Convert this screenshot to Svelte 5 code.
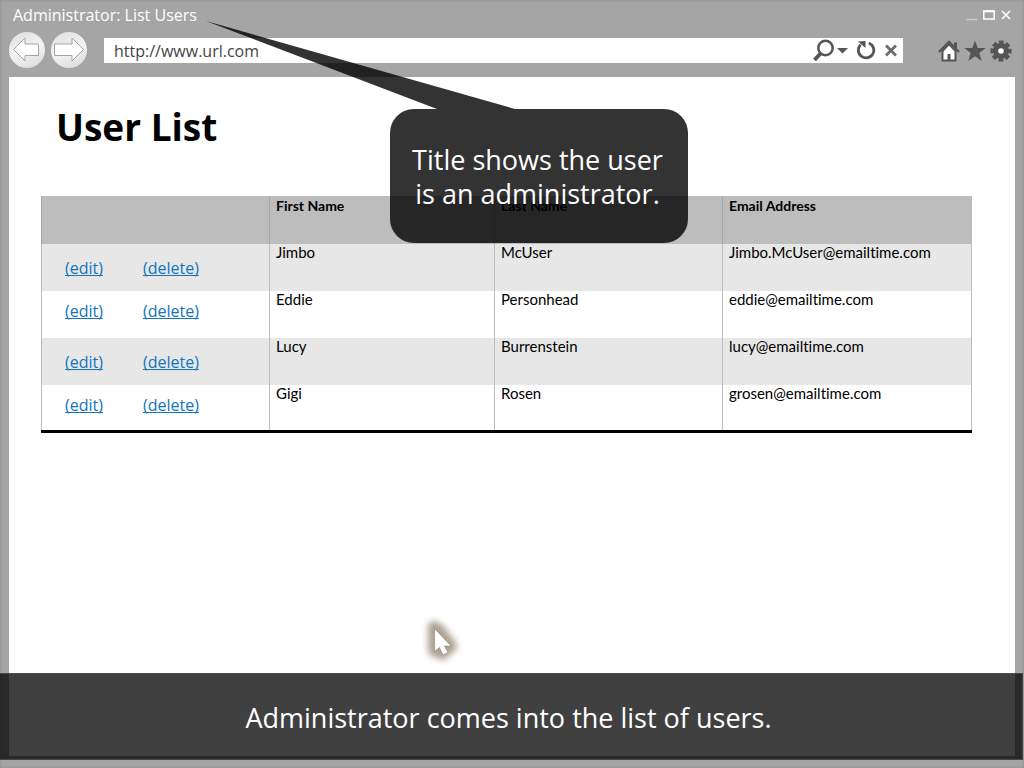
<script>
	let url = 'http://www.url.com';

	const users = [
		{ first: 'Jimbo', last: 'McUser', email: 'Jimbo.McUser@emailtime.com' },
		{ first: 'Eddie', last: 'Personhead', email: 'eddie@emailtime.com' },
		{ first: 'Lucy', last: 'Burrenstein', email: 'lucy@emailtime.com' },
		{ first: 'Gigi', last: 'Rosen', email: 'grosen@emailtime.com' }
	];
</script>

<div class="window">
	<!-- title bar -->
	<header class="title-bar">
		<span class="title">Administrator: List Users</span>
		<div class="window-buttons">
			<button aria-label="Minimize">
				<svg width="12" height="12" viewBox="0 0 12 12">
					<path d="M0.5 10.500h11" stroke="#c8c8c8" stroke-width="1.5" />
				</svg>
			</button>
			<button aria-label="Maximize">
				<svg width="12" height="12" viewBox="0 0 12 12">
					<path d="M0.800 2h10.400v8H0.800z" fill="none" stroke="#fff" stroke-width="1.5" />
					<path d="M0.800 2.300h10.400" stroke="#fff" stroke-width="2" />
				</svg>
			</button>
			<button aria-label="Close">
				<svg width="12" height="12" viewBox="0 0 12 12">
					<path d="M2 2l8 8M10 2l-8 8" stroke="#fff" stroke-width="1.6" />
				</svg>
			</button>
		</div>
	</header>

	<!-- toolbar -->
	<div class="toolbar">
		<div class="nav">
			<button aria-label="Back">
				<svg width="36" height="36" viewBox="0 0 36 36">
					<path d="M4.500 17.500L16 6v6h13.500v11.500H16v5.500z" fill="#fff" stroke="#a3a3a3" />
				</svg>
			</button>
			<button aria-label="Forward">
				<svg width="36" height="36" viewBox="0 0 36 36">
					<path d="M32.500 17.500L21 6v6H3.500v11.500H21v5.500z" fill="#fff" stroke="#a3a3a3" />
				</svg>
			</button>
		</div>

		<div class="address">
			<input type="text" aria-label="Address" bind:value={url} />
			<button aria-label="Search">
				<svg width="36" height="24" viewBox="0 0 36 24">
					<circle cx="13.500" cy="10" r="7.200" fill="none" stroke="#555" stroke-width="2.500" />
					<path d="M8.500 15.500L2.500 22" stroke="#555" stroke-width="4" />
					<path d="M25 10h11l-5.500 5.500z" fill="#555" />
				</svg>
			</button>
			<button aria-label="Refresh">
				<svg width="20" height="24" viewBox="0 0 20 24">
					<path d="M12.800 5A7.700 7.700 0 1 1 4.600 6.800" fill="none" stroke="#555" stroke-width="2.800" />
					<path d="M2 3.500L9.500 3v7z" fill="#555" />
				</svg>
			</button>
			<button aria-label="Stop">
				<svg width="14" height="24" viewBox="0 0 14 24">
					<path d="M2 7.500l10 10M12 7.500L2 17.500" stroke="#6c6c6c" stroke-width="2.800" />
				</svg>
			</button>
		</div>

		<div class="tools">
			<button aria-label="Home">
				<svg width="22" height="22" viewBox="0 0 22 22">
					<path d="M16 2.500h3V9l-3-3z" fill="#555" />
					<path d="M4.500 11L11 4l6.500 7v9.500h-13z" fill="#fff" stroke="#555" stroke-width="2" />
					<path d="M1 12L11 1.800l10 10.200" fill="none" stroke="#555" stroke-width="2.200" />
					<path d="M9.500 14h3v6.500h-3z" fill="#555" />
				</svg>
			</button>
			<button aria-label="Favorites">
				<svg width="22" height="22" viewBox="0 0 22 22">
					<path d="M11 0.500l2.700 7.600h8.100l-6.500 4.800 2.400 8L11 16.200l-6.700 4.700 2.400-8L0.200 8.100h8.100z" fill="#555" />
				</svg>
			</button>
			<button aria-label="Settings">
				<svg width="22" height="22" viewBox="0 0 22 22">
					<circle cx="11" cy="11" r="8" fill="#555" />
					<circle cx="11" cy="11" r="8.800" fill="none" stroke="#555" stroke-width="3.600" stroke-dasharray="4.600 2.310" stroke-dashoffset="2.300" />
					<circle cx="11" cy="11" r="2.800" fill="#fff" />
				</svg>
			</button>
		</div>
	</div>

	<!-- page -->
	<main class="page">
		<h1>User List</h1>
		<table>
			<thead>
				<tr>
					<th class="actions"></th>
					<th class="first">First Name</th>
					<th class="last">Last Name</th>
					<th>Email Address</th>
				</tr>
			</thead>
			<tbody>
				{#each users as user}
					<tr>
						<td class="actions">
							<div class="links">
								<a href="#edit">(edit)</a>
								<a href="#delete">(delete)</a>
							</div>
						</td>
						<td>{user.first}</td>
						<td>{user.last}</td>
						<td>{user.email}</td>
					</tr>
				{/each}
			</tbody>
		</table>
	</main>

	<!-- annotations over the page -->
	<div class="callout">
		<svg class="tail" width="310" height="88" viewBox="0 0 310 88">
			<path d="M0 0L309 88H231z" />
		</svg>
		Title shows the user<br />is an administrator.
	</div>

	<svg class="cursor" width="60" height="64" viewBox="0 0 60 64">
		<defs>
			<filter id="glow" x="-100%" y="-100%" width="300%" height="300%">
				<feGaussianBlur stdDeviation="3" />
			</filter>
		</defs>
		<path d="M24 17L24 40L32 44L41 36L29 20z" fill="#8a7a64" stroke="#8a7a64" stroke-width="12" stroke-linejoin="round" opacity="0.7" filter="url(#glow)" />
		<path d="M24.500 18.500v23l5-4 3.500 7.500 5-2.500-3.500-6.500h6.500z" fill="#fff" stroke="#8c8373" stroke-width="0.600" />
	</svg>

	<div class="caption">Administrator comes into the list of users.</div>
</div>

<style>
	:global(body) {
		margin: 0;
	}
	.window {
		position: relative;
		display: flex;
		flex-direction: column;
		box-sizing: border-box;
		min-height: 100vh;
		padding: 0 9px 12px;
		background: #a5a5a5;
		box-shadow: inset 0 0 3px #888;
		font-family: 'Open Sans', 'Noto Sans', sans-serif;
	}
	button {
		display: flex;
		padding: 0;
		border: none;
		background: none;
		cursor: pointer;
	}
	.title-bar {
		display: flex;
		align-items: center;
		justify-content: space-between;
		height: 30px;
		padding: 0 3px 2px 4px;
	}
	.title {
		color: #fff;
		font-size: 16px;
	}
	.window-buttons {
		display: flex;
		gap: 5px;
	}
	.toolbar {
		display: flex;
		align-items: center;
		height: 36px;
		padding-bottom: 9px;
	}
	.nav {
		display: flex;
		gap: 6px;
		margin-right: 17px;
	}
	.nav button {
		border-radius: 50%;
		background: linear-gradient(160deg, #ddd, #f4f4f4 50%, #d8d8d8);
	}
	.address {
		display: flex;
		flex: 1;
		align-items: center;
		gap: 8px;
		height: 25px;
		padding-right: 5px;
		background: #fff;
	}
	.address input {
		flex: 1;
		min-width: 0;
		padding: 2px 0 0 10px;
		border: none;
		outline: none;
		background: none;
		color: #444;
		font: inherit;
		font-size: 16px;
	}
	.tools {
		display: flex;
		gap: 4px;
		margin: 2px 3px 0 35px;
	}
	.page {
		flex: 1;
		padding: 23px 43px 0 32px;
		background: #fff;
	}
	h1 {
		margin: 0 0 42px;
		padding-left: 15px;
		font-size: 37px;
		line-height: 54px;
	}
	table {
		width: 100%;
		table-layout: fixed;
		border-collapse: collapse;
		border: 1px solid #bdbdbd;
		border-bottom: 3px solid #000;
		font-family: Lato, 'Open Sans', sans-serif;
		font-size: 15px;
		font-variant-ligatures: none;
		line-height: 16px;
	}
	th,
	td {
		height: 47px;
		box-sizing: border-box;
		padding: 0 6px;
		border-left: 1px solid #bdbdbd;
		text-align: left;
		vertical-align: top;
	}
	thead tr {
		background: #bdbdbd;
	}
	th {
		border-left-color: #a6a6a6;
		font-size: 14px;
		line-height: 18px;
	}
	tbody tr:nth-child(odd) {
		background: #e7e7e7;
	}
	.actions {
		width: 228px;
		padding: 0;
	}
	.first {
		width: 225px;
	}
	.last {
		width: 228px;
	}
	.links {
		display: flex;
		gap: 40px;
		padding: 8px 0 0 23px;
		font-family: 'Open Sans', 'Noto Sans', sans-serif;
		font-size: 16px;
		line-height: 24px;
	}
	tr:nth-child(odd) .links {
		padding-top: 12px;
	}
	a {
		color: #0f75bd;
		text-decoration-skip-ink: none;
	}
	.callout {
		position: absolute;
		top: 109px;
		left: 390px;
		display: flow-root;
		box-sizing: border-box;
		width: 298px;
		padding: 34px 13px 32px 10px;
		border-radius: 24px;
		background: rgba(0, 0, 0, 0.8);
		color: #fff;
		font-size: 27px;
		line-height: 34px;
		text-align: center;
	}
	.tail {
		position: absolute;
		bottom: 100%;
		right: 172px;
		fill: rgba(0, 0, 0, 0.8);
	}
	.cursor {
		position: absolute;
		top: 610px;
		left: 410px;
	}
	.caption {
		position: absolute;
		right: 1px;
		bottom: 8px;
		left: 0;
		box-sizing: border-box;
		padding: 25px 5px 22px 0;
		border: 1px solid rgba(90, 90, 90, 0.6);
		border-left: none;
		background: rgba(0, 0, 0, 0.75);
		color: #fff;
		font-size: 27px;
		line-height: 38px;
		text-align: center;
	}
</style>
